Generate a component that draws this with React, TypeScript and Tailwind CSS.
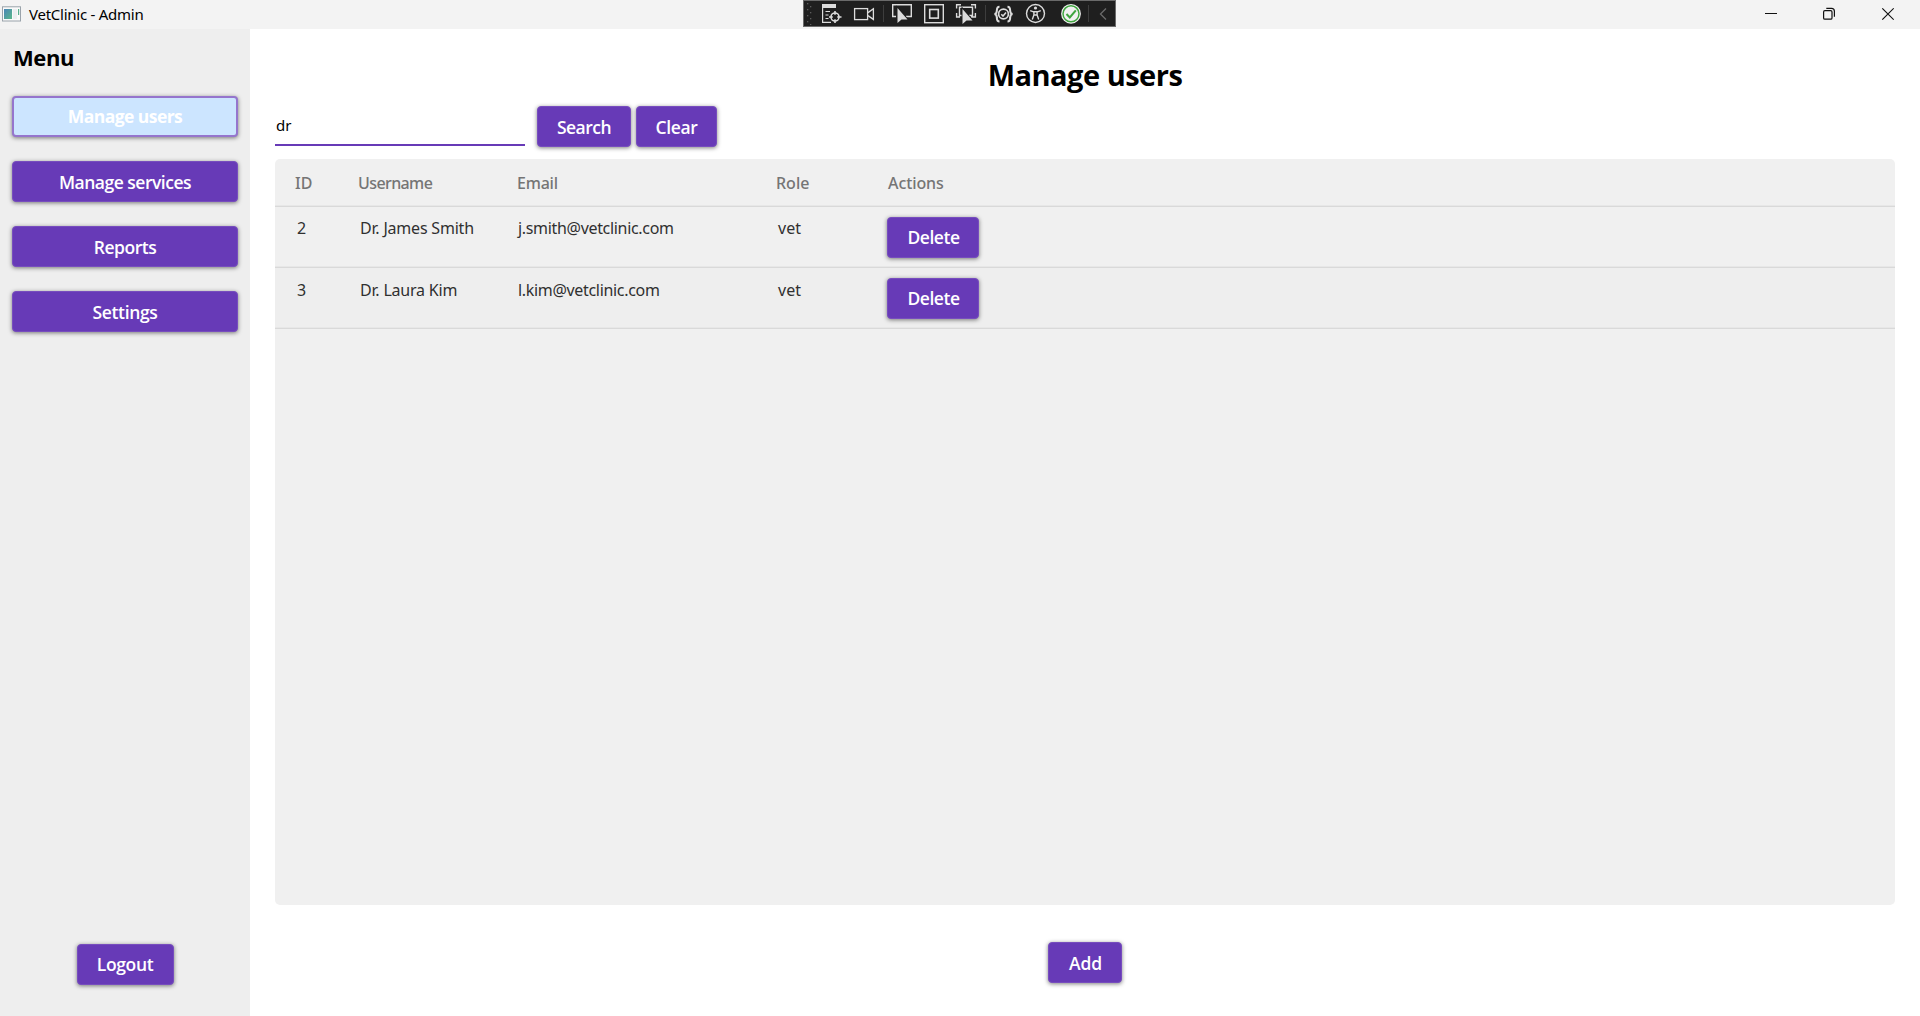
import React from "react";

function Btn({ children, className = "" }: { children: React.ReactNode; className?: string }) {
  return (
    <button
      className={`flex shrink-0 items-center justify-center rounded-[4px] border border-[#774dbe] bg-[#673ab7] font-['Open_Sans',sans-serif] text-[17.5px] font-semibold leading-none text-white shadow-[0_1px_4px_rgba(0,0,0,0.5)] ${className}`}
    >
      {children}
    </button>
  );
}

function AppIcon() {
  return (
    <svg width="20" height="17" viewBox="0 0 20 17" className="shrink-0">
      <defs>
        <linearGradient id="pane" x1="0" y1="0" x2="1" y2="1">
          <stop offset="0" stopColor="#4a86b8" />
          <stop offset="1" stopColor="#5bb88a" />
        </linearGradient>
      </defs>
      <rect x="0.5" y="0.8" width="18" height="14.2" fill="#fafafa" stroke="#9aa3ab" />
      <rect x="2" y="3" width="8" height="10" fill="url(#pane)" />
      <rect x="11" y="3" width="4" height="10" fill="#eceff1" />
      <rect x="16" y="3" width="1.2" height="6" fill="#5bb08f" />
    </svg>
  );
}

const cursorPath = "M0 0V15L4 11.4H10Z";

function DebugBar() {
  return (
    <svg width="314" height="27" viewBox="803 0 314 27" className="absolute left-[803px] top-0" fill="none" stroke="#dcdcdc">
      <defs>
        <pattern id="grip" x="807" y="3" width="6" height="6" patternUnits="userSpaceOnUse">
          <rect width="1.3" height="1.3" x="0" y="0" fill="#5c5c5c" stroke="none" />
          <rect width="1.3" height="1.3" x="3" y="3" fill="#5c5c5c" stroke="none" />
        </pattern>
      </defs>
      <rect x="803.5" y="0.5" width="312" height="26" fill="#1f1f1f" stroke="#6a6a6a" />
      <rect x="807" y="3" width="6" height="22" fill="url(#grip)" stroke="none" />

      {/* live visual tree */}
      <rect x="822" y="4" width="14" height="4" fill="#dcdcdc" stroke="none" />
      <path d="M822.6 8V22.4H831M825.5 11.5H830M825.5 15H828.5M825.5 18.5H828.5" strokeWidth="1.2" />
      <circle cx="835" cy="17" r="4" strokeWidth="1.6" />
      <path d="M835 11V14.8M835 19.2V23M829 17H832.8M837.2 17H841.5" strokeWidth="1.6" />

      {/* camera */}
      <rect x="854.6" y="8.6" width="13" height="11" strokeWidth="1.3" />
      <path d="M868 12.6L873.4 8.8V19.4L868 15.6" strokeWidth="1.3" />
      <path d="M883.5 5V22" stroke="#3d3d3d" />

      {/* select element */}
      <path d="M896 16.5H892.7V4.7H911.3V16.5H906" strokeWidth="1.4" />
      <path d={cursorPath} transform="translate(897.5 8)" fill="#dcdcdc" stroke="#1f1f1f" strokeWidth="2" paintOrder="stroke" />

      {/* layout adorners */}
      <rect x="924.7" y="4.7" width="18.6" height="18" strokeWidth="1.4" />
      <rect x="929.7" y="9.5" width="8.6" height="8.6" strokeWidth="1.6" />

      {/* track focused element */}
      <path d="M956.6 8.5V4.7H961M971 4.7H975.4V8.5M956.6 13V17H960M975.4 13V17H971M962 15.5H959.5V7.3H972.5V15.5H969" strokeWidth="1.4" />
      <path d={cursorPath} transform="translate(962.5 9)" fill="#dcdcdc" stroke="#1f1f1f" strokeWidth="2" paintOrder="stroke" />
      <path d="M985.5 5V22" stroke="#3d3d3d" />

      {/* binding check */}
      <path d="M999.5 6.7C996.5 6.7 997 9 996.8 11C996.7 12.8 995.8 13.8 994.5 14C995.8 14.2 996.7 15.4 996.8 17.2C997 19.5 996.5 21.5 999.5 21.5M1007.5 6.7C1010.5 6.7 1010 9 1010.2 11C1010.3 12.8 1011.2 13.8 1012.5 14C1011.2 14.2 1010.3 15.4 1010.2 17.2C1010 19.5 1010.5 21.5 1007.5 21.5" strokeWidth="2" />
      <circle cx="1003.5" cy="14" r="4.9" strokeWidth="1.7" />
      <path d="M1001.3 14.2L1003 16L1006 12.4" strokeWidth="1.5" />

      {/* accessibility */}
      <circle cx="1035.5" cy="13.5" r="9" strokeWidth="1.4" />
      <circle cx="1035.5" cy="8" r="1.6" fill="#dcdcdc" stroke="none" />
      <path d="M1030.2 10.6L1033.5 11.8H1037.5L1040.8 10.6M1033.9 11.8V15L1032.3 19.5M1037.1 11.8V15L1038.7 19.5M1033.9 15H1037.1" strokeWidth="1.4" />

      {/* hot reload status */}
      <circle cx="1071" cy="13.8" r="9.9" fill="#f1f1f1" stroke="none" />
      <circle cx="1071" cy="13.8" r="8" stroke="#3fa53f" strokeWidth="1.5" />
      <path d="M1066.5 14L1069.8 17.5L1075.8 10.3" stroke="#3fa53f" strokeWidth="2" />
      <path d="M1088.5 5V22" stroke="#3d3d3d" />
      <path d="M1106 8.5L1100.5 14L1106 19.5" stroke="#6a6a6a" strokeWidth="1.3" />
    </svg>
  );
}

function TitleBar() {
  return (
    <header className="relative flex h-[29px] shrink-0 items-center justify-between bg-[#f3f3f3]">
      <div className="flex items-center pl-[2px]">
        <AppIcon />
        <span className="ml-[7px] text-[15px] leading-none tracking-[-0.25px] text-black">VetClinic - Admin</span>
      </div>
      <DebugBar />
      <svg width="132" height="29" viewBox="1762 0 132 29" className="mr-[26px]" fill="none" stroke="#111" strokeWidth="1.2">
        <path d="M1765 13.5H1777" strokeWidth="1" />
        <rect x="1823.6" y="10.6" width="8.4" height="8.6" rx="1.3" />
        <path d="M1826.3 8.4H1831.5Q1834.4 8.4 1834.4 11.3V16.8" />
        <path d="M1882.3 8.3L1893.7 19.7M1893.7 8.3L1882.3 19.7" />
      </svg>
    </header>
  );
}

const users = [
  { id: "2", name: "Dr. James Smith", email: "j.smith@vetclinic.com", role: "vet", row: "bg-[#f0f0f0]", cell: "pt-[9px]" },
  { id: "3", name: "Dr. Laura Kim", email: "l.kim@vetclinic.com", role: "vet", row: "bg-[#eeeeee]", cell: "pt-[10px]" },
];

const cols = "grid grid-cols-[63px_159px_259px_112px_1fr] pl-[19px] border-b border-[#d9d9d9] shadow-[inset_0_-1px_0_#e7e7e7]";

export default function App() {
  return (
    <div className="flex h-[1016px] w-[1920px] flex-col overflow-hidden bg-white font-['Noto_Sans',sans-serif]">
      <TitleBar />
      <div className="flex min-h-0 flex-1">
        <aside className="flex w-[250px] shrink-0 flex-col bg-[#eeeeee] px-3 pb-[31px]">
          <h2 className="mt-[14px] pl-px font-['Open_Sans',sans-serif] text-[22px] font-bold leading-7 tracking-[-0.4px] text-black">Menu</h2>
          <nav className="mt-[25px] flex flex-col gap-6">
            <Btn className="h-[41px] border-2! border-[#9575cd]! bg-[#cce5ff]! pt-px font-bold! tracking-[-0.55px]">Manage users</Btn>
            <Btn className="h-[41px] pt-[2px] tracking-[-0.5px]">Manage services</Btn>
            <Btn className="h-[41px] pt-[2px] tracking-[-0.45px]">Reports</Btn>
            <Btn className="h-[41px] pt-[2px] tracking-[-0.35px]">Settings</Btn>
          </nav>
          <Btn className="mx-auto mt-auto h-[41px] w-[97px] tracking-[-0.35px]">Logout</Btn>
        </aside>
        <main className="flex flex-1 flex-col pl-[25px] pr-[25px]">
          <h1 className="mt-[26px] text-center font-['Open_Sans',sans-serif] text-[29px] font-bold leading-10 tracking-[-0.5px] text-black">Manage users</h1>
          <div className="mt-[11px] flex h-[41px]">
            <input
              readOnly
              value="dr"
              className="h-10 w-[250px] border-b-2 border-[#673ab7] pl-px text-[15px] text-black outline-none"
            />
            <Btn className="ml-[12px] h-[41px] w-[94px] pt-[2px] tracking-[-0.5px]">Search</Btn>
            <Btn className="ml-[5px] h-[41px] w-[81px] pt-[2px] tracking-[-0.4px]">Clear</Btn>
          </div>
          <section className="mt-3 h-[746px] overflow-hidden rounded-[5px] bg-[#f0f0f0]">
            <div className={`${cols} h-12 items-center pt-px text-base font-medium text-[#757575]`}>
              <span className="pl-px">ID</span>
              <span className="pl-px tracking-[-0.6px]">Username</span>
              <span className="pl-px tracking-[-0.2px]">Email</span>
              <span className="pl-px">Role</span>
              <span className="pl-px tracking-[-0.1px]">Actions</span>
            </div>
            {users.map((u) => (
              <div key={u.id} className={`${cols} ${u.row} h-[61px] text-base leading-6 text-[#303030]`}>
                <span className={`${u.cell} pl-[3px]`}>{u.id}</span>
                <span className={`${u.cell} pl-[3px] tracking-[-0.2px]`}>{u.name}</span>
                <span className={`${u.cell} pl-[2px] tracking-[-0.32px]`}>{u.email}</span>
                <span className={`${u.cell} pl-[3px]`}>{u.role}</span>
                <div className="pt-[10px]">
                  <Btn className="h-[41px] w-[92px] pl-px tracking-[-0.45px]">Delete</Btn>
                </div>
              </div>
            ))}
          </section>
          <Btn className="mx-auto mt-[37px] h-[41px] w-[74px] pl-px pt-[2px] tracking-[-0.1px]">Add</Btn>
        </main>
      </div>
    </div>
  );
}
